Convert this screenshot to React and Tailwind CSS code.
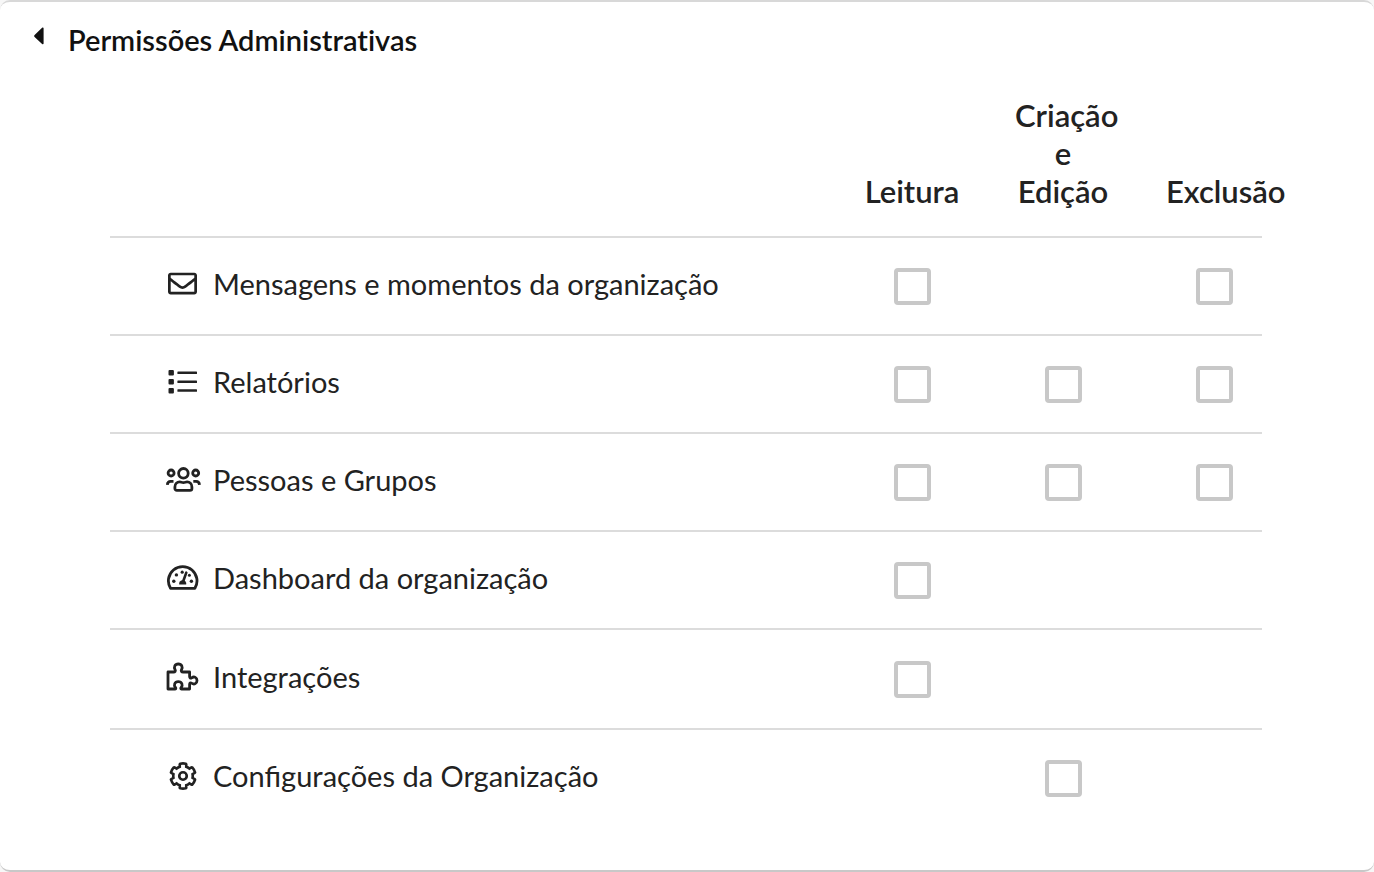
import React, {useState} from "react";
import {FaRegEnvelope} from "react-icons/fa";

const ListIcon = () => (
  <svg width="30" height="24" viewBox="0 0 30 24" fill="currentColor">
    <rect x="0.5" y="0" width="5.4" height="5.4" rx="1" />
    <rect x="0.5" y="9" width="5.4" height="5.4" rx="1" />
    <rect x="0.5" y="18" width="5.4" height="5.4" rx="1" />
    <rect x="9.4" y="1.5" width="19.6" height="2.6" rx="0.6" />
    <rect x="9.4" y="10.4" width="19.6" height="2.6" rx="0.6" />
    <rect x="9.4" y="19.2" width="19.6" height="2.6" rx="0.6" />
  </svg>
);

const PeopleIcon = () => (
  <svg width="37" height="28" viewBox="-1 0 37 28" fill="none" stroke="currentColor" strokeWidth="2.8" className="shrink-0">
    <circle cx="18.4" cy="7.3" r="4.8" />
    <circle cx="6.1" cy="7" r="3" />
    <circle cx="30.7" cy="7" r="3" />
    <path d="M9.9 22.4v-1.5c0-3 2.3-5 4.8-5 1.5 0 2 .7 3.7.7s2.2-.7 3.7-.7c2.5 0 4.8 2 4.8 5v1.5a1.9 1.9 0 0 1-1.9 1.9H11.8a1.9 1.9 0 0 1-1.9-1.9z" />
    <path d="M2.3 18.8c.2-2.1 1.5-3.4 3.4-3.4h2.8M34.5 18.8c-.2-2.1-1.5-3.4-3.4-3.4h-2.8" />
  </svg>
);

const GaugeIcon = () => (
  <svg width="33" height="28" viewBox="0 0 33 28" fill="none" stroke="currentColor" strokeLinejoin="round">
    <path strokeWidth="2.8" d="M4.5 24.3A14.3 14.3 0 1 1 28.9 24.3Z" />
    <path strokeWidth="2.6" strokeLinecap="round" d="M20.3 8.6L17.3 17" />
    <g fill="currentColor" stroke="none">
      <path d="M13.2 20.6a3.6 3.6 0 1 1 7 0z" />
      <circle cx="7.8" cy="17.2" r="1.7" />
      <circle cx="10.4" cy="10.9" r="1.7" />
      <circle cx="16.2" cy="8.2" r="1.6" />
      <circle cx="23.4" cy="11.2" r="1.5" />
      <circle cx="25.4" cy="17.2" r="1.7" />
    </g>
  </svg>
);

const PuzzleIcon = () => (
  <svg width="35" height="32" viewBox="0 0 35 32" fill="none" stroke="currentColor" strokeWidth="2.8" strokeLinejoin="round">
    <path d="M3 11h5.500c1.600 0 2.300-1 1.600-2.200C8.600 6.300 9.800 3 13.300 3s4.700 3.300 3.200 5.800c-.7 1.200 0 2.200 1.600 2.200h6.500v4.500c0 1.500 1 2 2 1.300 2.700-1.800 5.400-.2 5.400 2.700s-2.700 4.500-5.400 2.700c-1-.7-2-.2-2 1.300V28h-8.100c-.9 0-.9-.8-.3-1.500 1.900-2.300.9-5.900-2.900-5.900s-4.800 3.600-2.900 5.900c.6.7.6 1.500-.3 1.500H3z" />
  </svg>
);

const GearIcon = () => (
  <svg width="28" height="28" viewBox="-20 -20 552 552" fill="none" stroke="currentColor" strokeWidth="52">
    <path d="M487.4 315.7l-42.6-24.6c4.3-23.2 4.3-47 0-70.2l42.6-24.6c4.9-2.8 7.1-8.6 5.5-14-11.1-35.6-30-67.8-54.7-94.6-3.8-4.1-10-5.1-14.8-2.3L380.8 110c-17.9-15.4-38.5-27.3-60.8-35.1V25.8c0-5.6-3.9-10.5-9.4-11.7-36.7-8.2-74.3-7.8-109.2 0-5.5 1.2-9.4 6.1-9.4 11.7V75c-22.2 7.9-42.8 19.8-60.8 35.1L88.7 85.5c-4.9-2.8-11-1.9-14.8 2.3-24.7 26.7-43.6 58.9-54.7 94.6-1.7 5.4.6 11.2 5.5 14L67.3 221c-4.3 23.2-4.3 47 0 70.2l-42.6 24.6c-4.9 2.8-7.1 8.6-5.5 14 11.1 35.6 30 67.8 54.7 94.6 3.8 4.1 10 5.1 14.8 2.3l42.6-24.6c17.9 15.4 38.5 27.3 60.8 35.1v49.2c0 5.6 3.9 10.5 9.4 11.7 36.7 8.2 74.3 7.8 109.2 0 5.5-1.2 9.4-6.1 9.4-11.7v-49.2c22.2-7.9 42.8-19.8 60.8-35.1l42.6 24.6c4.9 2.8 11 1.9 14.8-2.3 24.7-26.7 43.6-58.9 54.7-94.6 1.5-5.5-.7-11.3-5.6-14.1z" />
    <circle cx="256" cy="256" r="74" />
  </svg>
);

const columns = [
  {id: "leitura", label: "Leitura"},
  {id: "edicao", label: "Criação e Edição"},
  {id: "exclusao", label: "Exclusão"},
];

const rows = [
  {id: "mensagens", label: "Mensagens e momentos da organização", icon: <FaRegEnvelope size={29} />, allowed: ["leitura", "exclusao"], height: "h-[98px]"},
  {id: "relatorios", label: "Relatórios", icon: <ListIcon />, allowed: ["leitura", "edicao", "exclusao"], height: "h-[98px]"},
  {id: "pessoas", label: "Pessoas e Grupos", icon: <PeopleIcon />, allowed: ["leitura", "edicao", "exclusao"], height: "h-[98px]"},
  {id: "dashboard", label: "Dashboard da organização", icon: <GaugeIcon />, allowed: ["leitura"], height: "h-[98px]"},
  {id: "integracoes", label: "Integrações", icon: <PuzzleIcon />, allowed: ["leitura"], height: "h-[100px]"},
  {id: "configuracoes", label: "Configurações da Organização", icon: <GearIcon />, allowed: ["edicao"], height: "h-[98px]"},
];

const App = () => {
  const [open, setOpen] = useState(true);
  const [checked, setChecked] = useState({});

  const toggle = (key) => setChecked({...checked, [key]: !checked[key]});

  return (
    <div className="bg-[#f7f7f7] font-['Lato',sans-serif] text-[#222]">
      <section className="rounded-[10px] border-y-2 border-t-[#d8d8d8] border-b-[#c8c8c8] bg-white pt-[19px] pb-[43px]">
        {/* Heading */}
        <h2 className="px-8 text-[29px] leading-[38px] font-semibold text-[#111] [font-variant-ligatures:none]">
          <button
            type="button"
            aria-expanded={open}
            onClick={() => setOpen(!open)}
            className="flex cursor-pointer items-start"
          >
            <svg width="12" height="18" viewBox="0 0 12 18" fill="currentColor" className="mt-[6px] mr-6">
              <path d="M11.6 1.2v15.4c0 .8-.9 1-1.5.4L2.6 10c-.6-.6-.6-1.4 0-2L10.1.8c.6-.6 1.5-.4 1.5.4z" />
            </svg>
            Permissões Administrativas
          </button>
        </h2>

        {/* Permissions table */}
        {open && (
          <div className="mt-[37px] pr-28 pl-[110px]">
            <table className="w-full table-fixed">
              <colgroup>
                <col />
                <col className="w-[151px]" />
                <col className="w-[151px]" />
                <col className="w-[151px]" />
              </colgroup>
              <thead>
                <tr>
                  <td></td>
                  {columns.map((column) => (
                    <th
                      key={column.id}
                      id={column.id}
                      scope="col"
                      className="pb-[26px] pl-[55px] text-center align-bottom text-[31px] leading-[38px] font-semibold"
                    >
                      {column.label}
                    </th>
                  ))}
                </tr>
              </thead>
              <tbody>
                {rows.map((row) => (
                  <tr key={row.id} className={`border-t-2 border-[#dcdcdc] ${row.height}`}>
                    <th id={row.id} scope="row" className="pb-[5px] pl-[55px] text-left font-normal">
                      <div className="flex items-center gap-[13px] text-[29px] leading-[38px]">
                        <span className="flex w-[35px] shrink-0 justify-center">{row.icon}</span>
                        {row.label}
                      </div>
                    </th>
                    {columns.map((column) => (
                      <td key={column.id} className="pl-[55px]">
                        {row.allowed.includes(column.id) && (
                          <input
                            type="checkbox"
                            aria-labelledby={`${row.id} ${column.id}`}
                            checked={!!checked[`${row.id}-${column.id}`]}
                            onChange={() => toggle(`${row.id}-${column.id}`)}
                            className="mx-auto block size-[37px] appearance-none rounded-[4px] border-4 border-[#c8c8c8] bg-white checked:bg-[#c8c8c8]"
                          />
                        )}
                      </td>
                    ))}
                  </tr>
                ))}
              </tbody>
            </table>
          </div>
        )}
      </section>
    </div>
  );
};

export default App;
